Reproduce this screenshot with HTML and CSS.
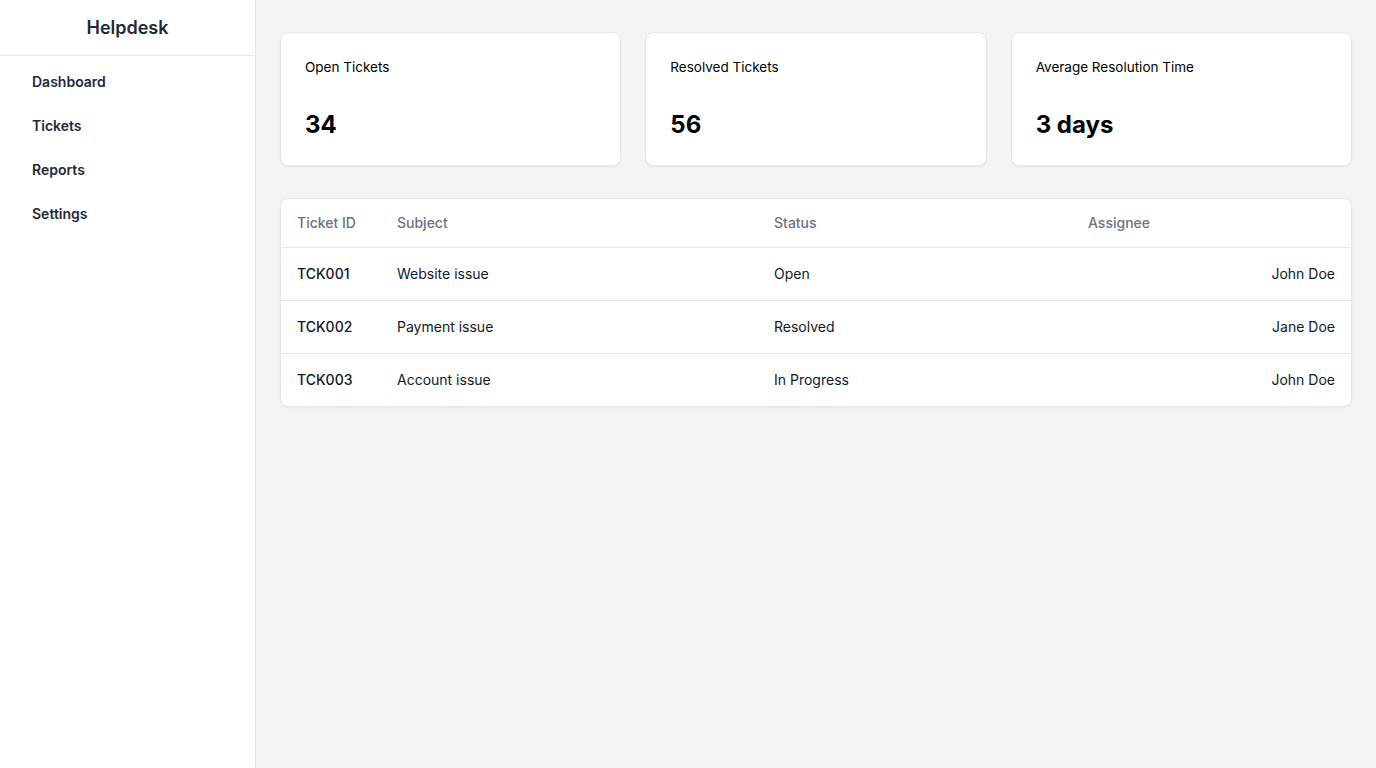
FILE: index.html
```html
<!DOCTYPE html>
<html lang="en">
<head>
<meta charset="utf-8">
<title>Helpdesk</title>
<link rel="stylesheet" href="styles.css">
</head>
<body>
<div class="layout">
  <aside class="sidebar">
    <div class="brand">Helpdesk</div>
    <nav class="nav">
      <a class="nav-item" href="#">Dashboard</a>
      <a class="nav-item" href="#">Tickets</a>
      <a class="nav-item" href="#">Reports</a>
      <a class="nav-item" href="#">Settings</a>
    </nav>
  </aside>
  <main class="main">
    <section class="stats">
      <div class="card stat">
        <div class="stat-label">Open Tickets</div>
        <div class="stat-value">34</div>
      </div>
      <div class="card stat">
        <div class="stat-label">Resolved Tickets</div>
        <div class="stat-value">56</div>
      </div>
      <div class="card stat">
        <div class="stat-label">Average Resolution Time</div>
        <div class="stat-value">3 days</div>
      </div>
    </section>
    <section class="card table-card">
      <table class="tickets">
        <colgroup>
          <col class="c-id"><col class="c-subject"><col class="c-status"><col class="c-assignee">
        </colgroup>
        <thead>
          <tr><th>Ticket ID</th><th>Subject</th><th>Status</th><th>Assignee</th></tr>
        </thead>
        <tbody>
          <tr><td class="id">TCK001</td><td>Website issue</td><td>Open</td><td class="right">John Doe</td></tr>
          <tr><td class="id">TCK002</td><td>Payment issue</td><td>Resolved</td><td class="right">Jane Doe</td></tr>
          <tr><td class="id">TCK003</td><td>Account issue</td><td>In Progress</td><td class="right">John Doe</td></tr>
        </tbody>
      </table>
    </section>
  </main>
</div>
</body>
</html>
```
FILE: styles.css
```css
* { box-sizing: border-box; }
html, body { margin: 0; padding: 0; }
body {
  font-family: Inter, "Noto Sans", sans-serif;
  color: #111827;
  background: #f3f4f6;
  font-size: 14px;
  line-height: 20px;
}
.layout { display: flex; min-height: 768px; }
.sidebar {
  width: 256px;
  flex: 0 0 256px;
  background: #fff;
  border-right: 1px solid #e5e7eb;
}
.brand {
  height: 56px;
  border-bottom: 1px solid #e5e7eb;
  display: flex;
  align-items: center;
  justify-content: center;
  font-size: 18px;
  font-weight: 600;
  color: #1f2937;
}
.nav {
  display: flex;
  flex-direction: column;
  gap: 4px;
  padding: 6px 16px;
}
.nav-item {
  display: block;
  padding: 10px 16px;
  color: #1f2937;
  font-weight: 600;
  text-decoration: none;
  border-radius: 6px;
}
.main {
  flex: 1;
  padding: 32px 24px;
}
.stats {
  display: grid;
  grid-template-columns: repeat(3, 1fr);
  gap: 24px;
}
.card {
  background: #fff;
  border: 1px solid #e5e7eb;
  border-radius: 8px;
  box-shadow: 0 1px 2px rgba(0,0,0,0.05);
}
.stat { padding: 24px; }
.stat-label {
  font-size: 13.5px;
  font-weight: 400;
  color: #000;
}
.stat-value {
  margin-top: 32px;
  font-size: 24px;
  line-height: 32px;
  font-weight: 700;
  color: #000;
}
.table-card { margin-top: 32px; overflow: hidden; }
.tickets {
  width: 100%;
  border-collapse: collapse;
  table-layout: fixed;
}
.c-id { width: 100px; }
.c-subject { width: 377px; }
.c-status { width: 314px; }
.tickets th {
  text-align: left;
  font-weight: 500;
  color: #6b7280;
  padding: 14px 16px;
  border-bottom: 1px solid #e5e7eb;
}
.tickets td {
  padding: 16px 16px;
  color: #111827;
  border-bottom: 1px solid #e5e7eb;
}
.tickets tbody tr:last-child td { border-bottom: none; }
.tickets td.id { font-weight: 500; }
.tickets td.right { text-align: right; }
```
